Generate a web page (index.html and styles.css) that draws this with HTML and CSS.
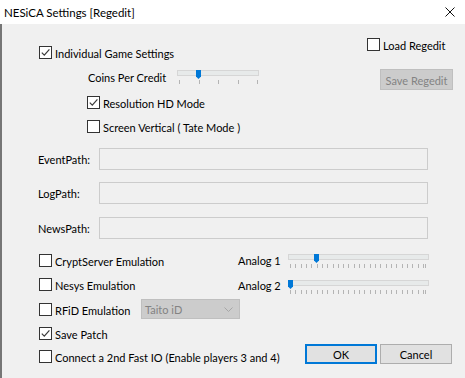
FILE: index.html
```html
<!DOCTYPE html>
<html>
<head>
<meta charset="utf-8">
<title>NESiCA Settings [Regedit]</title>
<link rel="stylesheet" href="styles.css">
</head>
<body>
<div class="window">
  <div class="titlebar">
    <span class="title">NESiCA Settings [Regedit]</span>
    <svg class="close" width="10" height="10" viewBox="0 0 10 10"><path d="M0.5 0.5 L9.5 9.5 M9.5 0.5 L0.5 9.5" stroke="#111" stroke-width="1"/></svg>
  </div>
  <div class="client">
    <div class="top">
      <div class="left">
        <label class="cb ind"><span class="box on"><svg viewBox="0 0 11 11" width="11" height="11"><polyline points="1.8,5.6 4.3,8.2 9.4,2.4" fill="none" stroke="#3a3a3a" stroke-width="1.2"/></svg></span><span class="txt">Individual Game Settings</span></label>
        <div class="coins">
          <span class="coins-label">Coins Per Credit</span>
          <div class="slider s-coins">
            <div class="track"></div>
            <span class="thumb" style="left:19px"></span>
            <div class="ticks t-coins"><i></i><i></i><i></i><i></i><i></i></div>
          </div>
        </div>
        <label class="cb sub res"><span class="box on"><svg viewBox="0 0 11 11" width="11" height="11"><polyline points="1.8,5.6 4.3,8.2 9.4,2.4" fill="none" stroke="#3a3a3a" stroke-width="1.2"/></svg></span><span class="txt">Resolution HD Mode</span></label>
        <label class="cb sub vert"><span class="box"></span><span class="txt">Screen Vertical ( Tate Mode )</span></label>
      </div>
      <div class="right">
        <label class="cb load"><span class="box"></span><span class="txt">Load Regedit</span></label>
        <button class="btn disabled save">Save Regedit</button>
      </div>
    </div>

    <div class="paths">
      <div class="path-row"><span class="plabel">EventPath:</span><span class="pinput"></span></div>
      <div class="path-row r2"><span class="plabel">LogPath:</span><span class="pinput"></span></div>
      <div class="path-row r3"><span class="plabel">NewsPath:</span><span class="pinput"></span></div>
    </div>

    <div class="bottom">
      <div class="brow b1">
        <label class="cb wide"><span class="box"></span><span class="txt">CryptServer Emulation</span></label>
        <span class="alabel">Analog 1</span>
        <div class="slider s-analog">
          <div class="track"></div>
          <span class="thumb" style="left:26px"></span>
          <div class="ticks-a"><div class="tgroup"><i></i><i></i><i></i><i></i><i></i><i></i><i></i><i></i><i></i><i></i><i></i><i></i><i></i><i></i><i></i><i></i><i></i><i></i><i></i><i></i><i></i><i></i><i></i><i></i><i></i><i></i></div><i class="last"></i></div>
        </div>
      </div>
      <div class="brow b2">
        <label class="cb wide"><span class="box"></span><span class="txt">Nesys Emulation</span></label>
        <span class="alabel">Analog 2</span>
        <div class="slider s-analog lower">
          <div class="track"></div>
          <span class="thumb" style="left:0px"></span>
          <div class="ticks-a"><div class="tgroup"><i></i><i></i><i></i><i></i><i></i><i></i><i></i><i></i><i></i><i></i><i></i><i></i><i></i><i></i><i></i><i></i><i></i><i></i><i></i><i></i><i></i><i></i><i></i><i></i><i></i><i></i></div><i class="last"></i></div>
        </div>
      </div>
      <div class="brow b3">
        <label class="cb rfid"><span class="box"></span><span class="txt">RFiD Emulation</span></label>
        <div class="combo"><span>Taito iD</span><svg width="9" height="5" viewBox="0 0 9 5"><polyline points="0.5,0.5 4.5,4.5 8.5,0.5" fill="none" stroke="#a6a6a6" stroke-width="1"/></svg></div>
      </div>
      <div class="brow b4">
        <label class="cb"><span class="box on"><svg viewBox="0 0 11 11" width="11" height="11"><polyline points="1.8,5.6 4.3,8.2 9.4,2.4" fill="none" stroke="#3a3a3a" stroke-width="1.2"/></svg></span><span class="txt">Save Patch</span></label>
      </div>
      <div class="brow b5">
        <label class="cb connect"><span class="box"></span><span class="txt">Connect a 2nd Fast IO (Enable players 3 and 4)</span></label>
        <button class="btn ok">OK</button>
        <button class="btn cancel">Cancel</button>
      </div>
    </div>
  </div>
</div>
</body>
</html>
```

FILE: styles.css
```css
* { box-sizing: border-box; margin: 0; padding: 0; }
html, body { width: 465px; height: 378px; overflow: hidden; }
body {
  font-family: Lato, "Noto Sans", sans-serif;
  font-size: 11px;
  color: #000;
  background: #f0f0f0;
}
.window { width: 465px; height: 378px; display: flex; flex-direction: column; }

.titlebar {
  height: 24px; flex: none; background: #fff;
  display: flex; align-items: center;
  padding: 0 10px 0 4px;
  font-size: 11.5px;
}
.title { flex: 1; padding-top: 1px; }
.close { display: block; }

.client { flex: 1; background: #f0f0f0; border-left: 2px solid #767676; }

/* checkbox */
.cb { display: flex; align-items: center; height: 13px; white-space: nowrap; }
.box {
  width: 13px; height: 13px; flex: none;
  border: 1px solid #333; background: #fff;
  display: flex; align-items: center; justify-content: center;
  margin-right: 3px;
}
.box svg { display: block; }
.txt { line-height: 13px; padding-top: 1px; }

/* top section */
.top { display: flex; height: 109px; }
.left { padding-left: 37px; }
.ind { margin-top: 22px; }
.coins { display: flex; height: 16px; margin-top: 10px; }
.coins-label { width: 89px; margin-left: 49px; line-height: 17px; }
.sub { margin-left: 48px; margin-top: 11px; }
.right { margin-left: auto; width: 86px; margin-right: 12px; }
.load { margin-top: 14px; }
.save { margin-top: 18px; margin-left: 13px; width: 73px; height: 21px; }

/* slider */
.slider { position: relative; }
.track { height: 6px; background: #e7eaea; border: 1px solid #d6d6d6; }
.thumb {
  position: absolute; top: 0; width: 5px; height: 9px; background: #0078d7;
  clip-path: polygon(0 0, 100% 0, 100% 72%, 50% 100%, 0 72%);
}
.s-coins { width: 82px; margin-top: 1px; }
.ticks { display: flex; justify-content: space-between; margin-top: 4px; padding: 0 1px 0 2px; }
.ticks i, .ticks-a i { display: block; width: 1px; height: 4px; background: #b4b4b4; }

.s-analog { width: 141px; }
.s-analog.lower { margin-top: 2px; }
.ticks-a { display: flex; margin-top: 4px; padding-left: 2px; }
.tgroup { display: flex; justify-content: space-between; width: 134px; }
.ticks-a i.last { margin-left: 1px; }

/* buttons */
.btn {
  font: inherit; color: #000;
  background: #e1e1e1; border: 1px solid #adadad;
  display: flex; align-items: center; justify-content: center;
  padding-top: 1px;
}
.btn.disabled { background: #cccccc; border-color: #bfbfbf; color: #838383; }
.ok { width: 72px; height: 20px; border: 2px solid #0078d7; }
.cancel { width: 72px; height: 20px; margin-left: 3px; }

/* path rows */
.paths { margin-top: 15px; }
.path-row { display: flex; align-items: center; height: 22px; }
.path-row.r2 { margin-top: 12px; }
.path-row.r3 { margin-top: 13px; }
.plabel { width: 97px; padding-left: 36px; padding-top: 1px; }
.pinput { width: 329px; height: 22px; border: 1px solid #cccccc; background: #f0f0f0; }

/* bottom */
.bottom { margin-top: 15px; }
.brow { display: flex; align-items: flex-start; padding-left: 37px; }
.b1 { height: 24px; }
.b2 { height: 21px; }
.b3 { height: 20px; }
.b4 { height: 13px; margin-top: 8px; }
.b5 { height: 20px; margin-top: 4px; }
.wide { width: 199px; }
.alabel { width: 50px; line-height: 13px; padding-top: 0; }
.b2 .alabel { margin-top: 1px; }
.rfid { width: 102px; margin-top: 4px; }
.connect { width: 266px; margin-top: 6px; }
.combo {
  width: 99px; height: 20px; background: #cccccc; border: 1px solid #bfbfbf;
  color: #838383; display: flex; align-items: center; justify-content: space-between;
  padding: 1px 6px 0 3px;
}
.combo svg { display: block; margin-top: -1px; }
```
